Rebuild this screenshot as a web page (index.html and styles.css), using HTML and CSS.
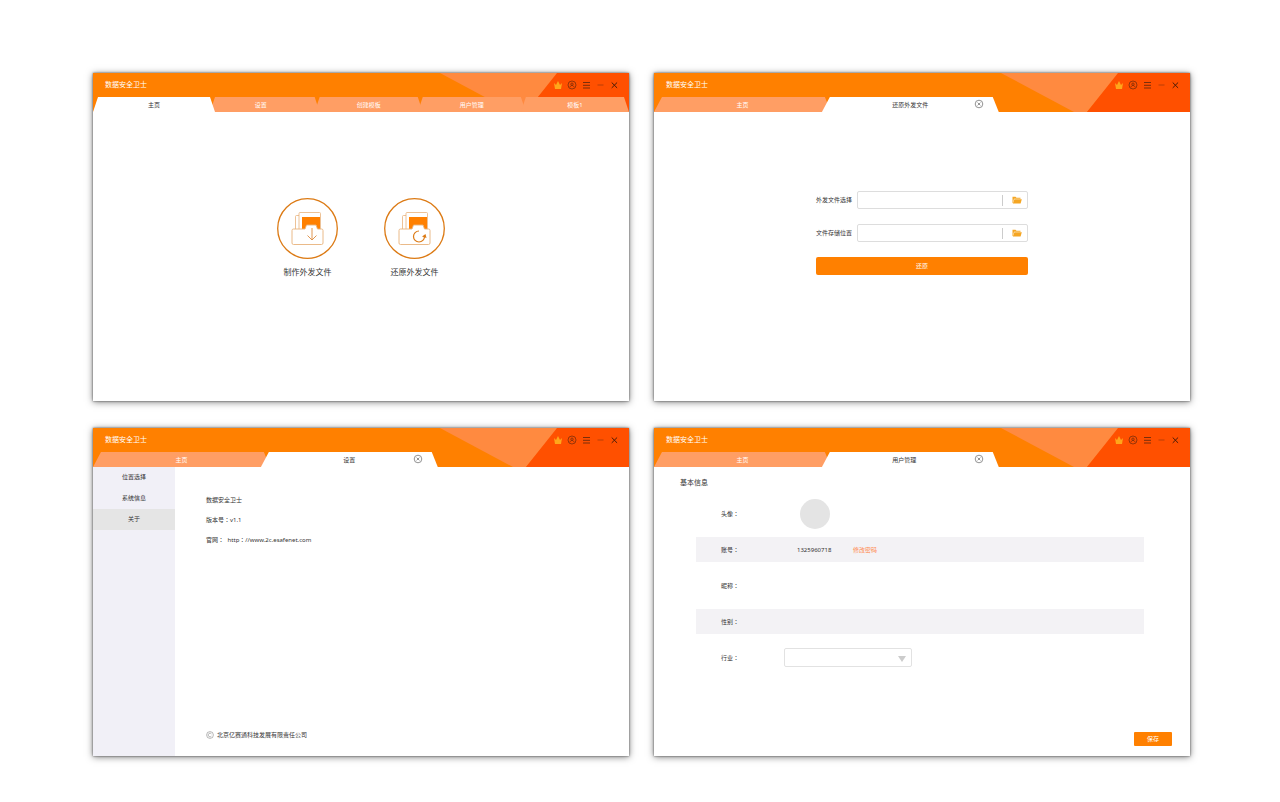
FILE: index.html
```html
<!DOCTYPE html>
<html lang="zh-CN">
<head>
    <meta charset="UTF-8">
    <meta name="viewport" content="width=device-width, initial-scale=1.0">
    <title>数据安全卫士</title>
    <link rel="stylesheet" href="styles.css">
</head>
<body>
    <!-- Shared icons -->
    <svg class="sprite" aria-hidden="true">
        <symbol id="stripes" viewBox="0 0 189 39">
            <path d="M0 0H118L86 39H73z" fill="#ff8a40"/>
            <path d="M117 0H189V39H86z" fill="#ff5000"/>
        </symbol>
        <symbol id="crown" viewBox="0 0 10 10">
            <path d="M1 3l2 2 2-4 2 4 2-2-1 6H2z" fill="#ffa61a"/>
        </symbol>
        <symbol id="user" viewBox="0 0 10 10">
            <g fill="none" stroke="#6b2a0c" stroke-width=".7">
                <circle cx="5" cy="5" r="4"/>
                <circle cx="5" cy="4.200" r="1.200"/>
                <path d="M3 7.200c.4-2.300 3.600-2.300 4 0"/>
            </g>
        </symbol>
        <symbol id="menu" viewBox="0 0 10 10">
            <path d="M2 2.500h7M2 5.300h7M2 8h7" stroke="#6b2a0c" stroke-width=".9"/>
        </symbol>
        <symbol id="minus" viewBox="0 0 10 10">
            <path d="M2.500 5h6" stroke="#a83a08" stroke-width=".8"/>
        </symbol>
        <symbol id="close" viewBox="0 0 10 10">
            <path d="M2.700 2.500l5.400 5.400M8.100 2.500l-5.400 5.400" stroke="#4a1c08"/>
        </symbol>
        <symbol id="tab-close" viewBox="0 0 10 10">
            <g fill="none" stroke="#666" stroke-width=".7">
                <circle cx="5" cy="5" r="3.800"/>
                <path d="M3.600 3.600l2.800 2.800M6.400 3.600L3.600 6.400"/>
            </g>
        </symbol>
        <symbol id="folder" viewBox="0 0 10 8">
            <path d="M.5 7V.7h3l1 1h4v1H2L.9 7z" fill="#f5a623"/>
            <path d="M2.400 3.300H9.800L8.600 7.600H.8z" fill="#f5a623"/>
        </symbol>
        <symbol id="files" viewBox="0 0 61 61">
            <circle cx="30.500" cy="30.500" r="29.800" fill="#fff" stroke="#dc7a14" stroke-width="1.300"/>
            <g fill="none" stroke="#e8b27c" stroke-width=".8">
                <path d="M18.500 31V18.500q0-1 1-1h2.500"/>
                <path d="M22 31V15.500q0-1 1-1h19.500q1 0 1 1V31"/>
            </g>
            <path d="M25 31V19h18v12h-3l-1-4h-9l-1 4z" fill="#ff8000"/>
            <path d="M16.500 31H28l1.500-4h9.500l1.500 4H44.500q1.500 0 1.500 1.500V45q0 1.500-1.500 1.500h-28q-1.500 0-1.500-1.500V32.500q0-1.500 1.500-1.500z" fill="#fff" stroke="#e8b27c" stroke-width=".9"/>
        </symbol>
    </svg>

    <div class="windows">
        <!-- Home -->
        <section class="window">
            <header class="window-header">
                <svg class="stripes"><use href="#stripes"/></svg>
                <div class="title-bar">
                    <h1>数据安全卫士</h1>
                    <div class="window-actions">
                        <button type="button" aria-label="会员"><svg><use href="#crown"/></svg></button>
                        <button type="button" aria-label="用户"><svg><use href="#user"/></svg></button>
                        <button type="button" aria-label="菜单"><svg><use href="#menu"/></svg></button>
                        <button type="button" aria-label="最小化"><svg><use href="#minus"/></svg></button>
                        <button type="button" aria-label="关闭"><svg><use href="#close"/></svg></button>
                    </div>
                </div>
                <nav class="tabs tabs-full">
                    <button type="button" class="tab active">主页</button>
                    <button type="button" class="tab tab-settings">设置</button>
                    <button type="button" class="tab">创建模板</button>
                    <button type="button" class="tab">用户管理</button>
                    <button type="button" class="tab">模板1</button>
                </nav>
            </header>
            <div class="home">
                <button type="button" class="home-action">
                    <svg viewBox="0 0 61 61">
                        <use href="#files"/>
                        <path d="M35 30v12M30.500 37.500L35 42l4.500-4.500" fill="none" stroke="#dc8a3c" stroke-width=".9"/>
                    </svg>
                    <span>制作外发文件</span>
                </button>
                <button type="button" class="home-action">
                    <svg viewBox="0 0 61 61">
                        <use href="#files"/>
                        <path d="M35 33a5.500 5.500 0 1 0 5.500 5.500" fill="none" stroke="#dc7a14" stroke-width="1.200"/>
                        <path d="M38 38.500l3.500-2.500 1 4z" fill="#dc7a14"/>
                    </svg>
                    <span>还原外发文件</span>
                </button>
            </div>
        </section>

        <!-- Restore file -->
        <section class="window">
            <header class="window-header">
                <svg class="stripes"><use href="#stripes"/></svg>
                <div class="title-bar">
                    <h1>数据安全卫士</h1>
                    <div class="window-actions">
                        <button type="button" aria-label="会员"><svg><use href="#crown"/></svg></button>
                        <button type="button" aria-label="用户"><svg><use href="#user"/></svg></button>
                        <button type="button" aria-label="菜单"><svg><use href="#menu"/></svg></button>
                        <button type="button" aria-label="最小化"><svg><use href="#minus"/></svg></button>
                        <button type="button" aria-label="关闭"><svg><use href="#close"/></svg></button>
                    </div>
                </div>
                <nav class="tabs tabs-pair">
                    <button type="button" class="tab">主页</button>
                    <div class="tab active">
                        <span>还原外发文件</span>
                        <button type="button" class="tab-close" aria-label="关闭标签"><svg><use href="#tab-close"/></svg></button>
                    </div>
                </nav>
            </header>
            <form class="restore-form">
                <div class="field">
                    <label for="sourceFile">外发文件选择</label>
                    <div class="file-input">
                        <input type="text" id="sourceFile" name="sourceFile">
                        <button type="button" aria-label="选择文件"><svg><use href="#folder"/></svg></button>
                    </div>
                </div>
                <div class="field">
                    <label for="savePath">文件存储位置</label>
                    <div class="file-input">
                        <input type="text" id="savePath" name="savePath">
                        <button type="button" aria-label="选择位置"><svg><use href="#folder"/></svg></button>
                    </div>
                </div>
                <button type="submit" class="restore-button">还原</button>
            </form>
        </section>

        <!-- Settings -->
        <section class="window">
            <header class="window-header">
                <svg class="stripes"><use href="#stripes"/></svg>
                <div class="title-bar">
                    <h1>数据安全卫士</h1>
                    <div class="window-actions">
                        <button type="button" aria-label="会员"><svg><use href="#crown"/></svg></button>
                        <button type="button" aria-label="用户"><svg><use href="#user"/></svg></button>
                        <button type="button" aria-label="菜单"><svg><use href="#menu"/></svg></button>
                        <button type="button" aria-label="最小化"><svg><use href="#minus"/></svg></button>
                        <button type="button" aria-label="关闭"><svg><use href="#close"/></svg></button>
                    </div>
                </div>
                <nav class="tabs tabs-pair">
                    <button type="button" class="tab">主页</button>
                    <div class="tab active">
                        <span>设置</span>
                        <button type="button" class="tab-close" aria-label="关闭标签"><svg><use href="#tab-close"/></svg></button>
                    </div>
                </nav>
            </header>
            <div class="settings">
                <nav class="side-menu">
                    <a href="#location">位置选择</a>
                    <a href="#system">系统信息</a>
                    <a href="#about" class="current">关于</a>
                </nav>
                <div class="about">
                    <p>数据安全卫士</p>
                    <p>版本号<span class="colon" lang="zh-TW">：</span>v1.1</p>
                    <p>官网<span class="colon" lang="zh-TW">：</span> <a href="#site">http<span class="colon" lang="zh-TW">：</span>//www.2c.esafenet.com</a></p>
                    <p class="copyright">
                        <svg viewBox="0 0 8 8">
                            <g fill="none" stroke="#888" stroke-width=".6">
                                <circle cx="4" cy="4" r="3.400"/>
                                <path d="M5.400 2.900a1.800 1.800 0 1 0 0 2.200"/>
                            </g>
                        </svg>
                        北京亿赛通科技发展有限责任公司
                    </p>
                </div>
            </div>
        </section>

        <!-- User management -->
        <section class="window">
            <header class="window-header">
                <svg class="stripes"><use href="#stripes"/></svg>
                <div class="title-bar">
                    <h1>数据安全卫士</h1>
                    <div class="window-actions">
                        <button type="button" aria-label="会员"><svg><use href="#crown"/></svg></button>
                        <button type="button" aria-label="用户"><svg><use href="#user"/></svg></button>
                        <button type="button" aria-label="菜单"><svg><use href="#menu"/></svg></button>
                        <button type="button" aria-label="最小化"><svg><use href="#minus"/></svg></button>
                        <button type="button" aria-label="关闭"><svg><use href="#close"/></svg></button>
                    </div>
                </div>
                <nav class="tabs tabs-pair">
                    <button type="button" class="tab">主页</button>
                    <div class="tab active tab-user">
                        <span>用户管理</span>
                        <button type="button" class="tab-close" aria-label="关闭标签"><svg><use href="#tab-close"/></svg></button>
                    </div>
                </nav>
            </header>
            <form class="profile">
                <h2>基本信息</h2>
                <div class="profile-row avatar-row">
                    <span class="profile-label">头像<span class="colon" lang="zh-TW">：</span></span>
                    <span class="avatar"></span>
                </div>
                <div class="profile-row shaded">
                    <span class="profile-label">账号<span class="colon" lang="zh-TW">：</span></span>
                    <span class="account">1325960718</span>
                    <a href="#password" class="change-password">修改密码</a>
                </div>
                <div class="profile-row">
                    <span class="profile-label">昵称<span class="colon" lang="zh-TW">：</span></span>
                </div>
                <div class="profile-row shaded">
                    <span class="profile-label">性别<span class="colon" lang="zh-TW">：</span></span>
                </div>
                <div class="profile-row">
                    <label class="profile-label" for="industry">行业<span class="colon" lang="zh-TW">：</span></label>
                    <div class="select-box">
                        <select id="industry" name="industry">
                            <option></option>
                        </select>
                    </div>
                </div>
                <button type="submit" class="save-button">保存</button>
            </form>
        </section>
    </div>
</body>
</html>
```
FILE: styles.css
```css
* {
    box-sizing: border-box;
}
body {
    margin: 0;
    background-color: #fff;
    color: #333;
    font-family: "Noto Sans", "Noto Sans CJK SC", sans-serif;
    font-size: 6px;
    line-height: 10px;
}
h1, h2, p {
    margin: 0;
    font-weight: normal;
}
button, input, select {
    margin: 0;
    padding: 0;
    border: none;
    background: none;
    color: inherit;
    font: inherit;
}
button {
    cursor: pointer;
}
svg {
    display: block;
}
a {
    color: inherit;
    text-decoration: none;
}
.sprite {
    position: absolute;
    width: 0;
    height: 0;
}
.colon {
    font-family: "Noto Sans CJK TC", sans-serif;
}
.windows {
    display: grid;
    grid-template-columns: 1fr 1fr;
    grid-auto-rows: 1fr;
    gap: 27px 25px;
    min-height: 100vh;
    padding: 73px 90px 46px 93px;
}
.window {
    display: flex;
    flex-direction: column;
    background-color: #fff;
    box-shadow: 0 0 2px rgba(0, 0, 0, 0.6), 0 1px 7px rgba(0, 0, 0, 0.5);
}

/* Header */
.window-header {
    position: relative;
    background-color: #ff8000;
}
.stripes {
    position: absolute;
    top: 0;
    right: 0;
    width: 189px;
    height: 39px;
}
.title-bar {
    position: relative;
    display: flex;
    align-items: center;
    justify-content: space-between;
    height: 24px;
    padding: 0 8px 0 12px;
}
.title-bar h1 {
    color: #fff;
    font-size: 7px;
}
.window-actions {
    display: flex;
}
.window-actions button {
    display: flex;
    justify-content: center;
    width: 14px;
}
.window-actions svg,
.tab-close svg {
    width: 10px;
    height: 10px;
}

/* Tabs */
.tabs {
    position: relative;
    display: flex;
    height: 15px;
}
.tab {
    display: flex;
    align-items: center;
    justify-content: center;
    background-color: #ff9e64;
    color: #fff;
}
.tab.active {
    z-index: 1;
    background-color: #fff;
    color: #333;
}
.tabs-full .tab {
    flex: 1 1 25%;
    clip-path: polygon(5px 0, calc(100% - 5px) 0, 100% 100%, 0 100%);
}
.tabs-full .tab + .tab {
    margin-left: -5px;
}
.tabs-full .tab.active {
    flex: 0 0 122px;
}
.tabs-full .tab-settings {
    padding-right: 8px;
}
.tabs-pair .tab {
    width: 33%;
    clip-path: polygon(8px 0, calc(100% - 6px) 0, 100% 100%, 0 100%);
}
.tabs-pair .tab.active {
    position: relative;
    margin-left: -9px;
}
.tabs-pair .tab.tab-user {
    padding-right: 12px;
}
.tab-close {
    position: absolute;
    top: 2px;
    right: 15px;
}

/* Home */
.home {
    display: flex;
    justify-content: center;
    gap: 46px;
    padding-top: 86px;
}
.home-action {
    display: flex;
    flex-direction: column;
    align-items: center;
    gap: 8px;
    width: 61px;
    font-size: 8px;
}
.home-action svg {
    width: 61px;
    height: 61px;
}

/* Restore form */
.restore-form {
    display: flex;
    flex-direction: column;
    gap: 15px;
    width: 212px;
    margin: 0 auto;
    padding-top: 79px;
}
.field {
    display: flex;
    align-items: center;
    justify-content: space-between;
    gap: 5px;
}
.file-input {
    display: flex;
    align-items: center;
    flex: 1;
    height: 18px;
    border: 1px solid #ddd;
    border-radius: 2px;
}
.file-input input {
    flex: 1;
    min-width: 0;
    height: 100%;
    padding: 0 4px;
}
.file-input button {
    display: flex;
    align-items: center;
    justify-content: center;
    width: 25px;
    height: 11px;
    padding-left: 3px;
    border-left: 1px solid #ccc;
}
.file-input svg {
    width: 10px;
    height: 8px;
}
.restore-button {
    height: 18px;
    border-radius: 2px;
    background-color: #ff8000;
    color: #fff;
}

/* Settings */
.settings {
    display: flex;
    flex: 1;
}
.side-menu {
    width: 82px;
    background-color: #f1f0f7;
    text-align: center;
}
.side-menu a {
    display: block;
    line-height: 21px;
}
.side-menu .current {
    background-color: #e5e5e5;
}
.about {
    display: flex;
    flex: 1;
    flex-direction: column;
    gap: 10px;
    padding: 28px 31px 16px;
}
.about a {
    margin-left: 2px;
}
.copyright {
    display: flex;
    align-items: center;
    gap: 3px;
    margin-top: auto;
}
.copyright svg {
    width: 8px;
    height: 8px;
}

/* User profile */
.profile {
    display: flex;
    flex: 1;
    flex-direction: column;
    gap: 11px;
    padding: 11px 18px 10px 26px;
}
.profile h2 {
    font-size: 7px;
}
.profile-row {
    display: flex;
    align-items: center;
    height: 25px;
    margin: 0 28px 0 16px;
    padding-left: 25px;
}
.profile-row.shaded {
    background-color: #f3f2f5;
}
.profile-label {
    width: 63px;
}
.avatar-row {
    height: 30px;
    margin-bottom: -3px;
}
.avatar {
    width: 30px;
    height: 30px;
    margin-left: 16px;
    border-radius: 50%;
    background-color: #e4e4e4;
}
.account {
    width: 56px;
    margin-left: 13px;
}
.change-password {
    color: #ff8a50;
}
.select-box {
    position: relative;
    width: 128px;
    height: 19px;
}
.select-box select {
    width: 100%;
    height: 100%;
    border: 1px solid #e2e2e2;
    border-radius: 2px;
    appearance: none;
}
.select-box::after {
    content: "";
    position: absolute;
    top: 8px;
    right: 6px;
    border: 4px solid transparent;
    border-top: 6px solid #ccc;
    border-bottom: none;
    pointer-events: none;
}
.save-button {
    width: 38px;
    height: 14px;
    margin-top: auto;
    margin-left: auto;
    border-radius: 1px;
    background-color: #ff8000;
    color: #fff;
}
```
